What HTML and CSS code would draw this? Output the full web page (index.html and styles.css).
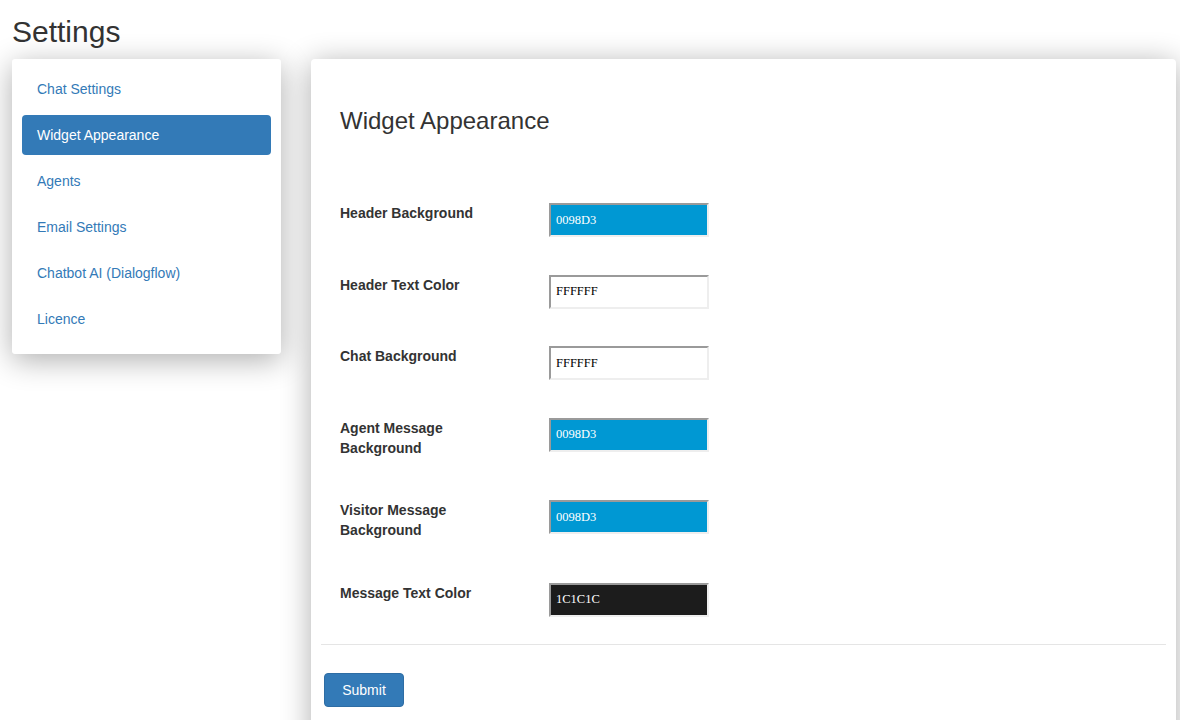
FILE: index.html
```html
<!DOCTYPE html>
<html>
<head>
<meta charset="utf-8">
<link rel="stylesheet" href="styles.css">
</head>
<body>
<div class="page">
  <h1 class="title">Settings</h1>
  <div class="layout">
    <nav class="sidebar">
      <a class="nav-item" href="#">Chat Settings</a>
      <a class="nav-item active" href="#">Widget Appearance</a>
      <a class="nav-item" href="#">Agents</a>
      <a class="nav-item" href="#">Email Settings</a>
      <a class="nav-item" href="#">Chatbot AI (Dialogflow)</a>
      <a class="nav-item" href="#">Licence</a>
    </nav>
    <main class="panel">
      <div class="panel-body">
        <h2 class="heading">Widget Appearance</h2>
        <form class="form">
          <div class="row">
            <label class="label">Header Background</label>
            <input class="color blue" type="text" value="0098D3">
          </div>
          <div class="row">
            <label class="label">Header Text Color</label>
            <input class="color white" type="text" value="FFFFFF">
          </div>
          <div class="row">
            <label class="label">Chat Background</label>
            <input class="color white" type="text" value="FFFFFF">
          </div>
          <div class="row">
            <label class="label">Agent Message Background</label>
            <input class="color blue" type="text" value="0098D3">
          </div>
          <div class="row">
            <label class="label">Visitor Message Background</label>
            <input class="color blue" type="text" value="0098D3">
          </div>
          <div class="row">
            <label class="label">Message Text Color</label>
            <input class="color dark" type="text" value="1C1C1C">
          </div>
        </form>
      </div>
      <hr class="divider">
      <div class="footer">
        <button class="btn" type="button">Submit</button>
      </div>
    </main>
  </div>
</div>
</body>
</html>
```

FILE: styles.css
```css
html, body {
  margin: 0;
  padding: 0;
  background: #fff;
  font-family: "Liberation Sans", Arial, sans-serif;
  font-size: 14px;
  color: #333;
  overflow: hidden;
}

.page {
  padding: 0 4px 0 12px;
}

.title {
  margin: 15px 0 11px;
  font-size: 30px;
  line-height: 33px;
  font-weight: 400;
  color: #333;
}

.layout {
  display: flex;
  align-items: flex-start;
  gap: 30px;
}

.sidebar {
  width: 249px;
  flex: none;
  padding: 10px 10px 15px;
  background: #fff;
  border-radius: 3px;
  box-shadow: 0 6px 30px rgba(0, 0, 0, 0.32);
  display: flex;
  flex-direction: column;
  gap: 6px;
}

.nav-item {
  display: block;
  padding: 10px 15px;
  line-height: 20px;
  color: #337ab7;
  text-decoration: none;
  border-radius: 4px;
}

.nav-item.active {
  background: #337ab7;
  color: #fff;
}

.panel {
  flex: 1;
  height: 700px;
  background: #fff;
  border-radius: 4px;
  box-shadow: 0 4px 30px rgba(0, 0, 0, 0.32);
  padding: 0 10px;
}

.panel-body {
  padding: 49px 19px 0;
}

.heading {
  margin: 0 0 69px;
  font-size: 24px;
  line-height: 26px;
  font-weight: 400;
  color: #333;
}

.form {
  display: flex;
  flex-direction: column;
  gap: 37.5px;
}

.row {
  display: grid;
  grid-template-columns: 209px 160px;
  align-items: start;
}

.label {
  width: 150px;
  font-weight: 700;
  line-height: 20px;
  margin: 0 0 5px;
}

.color {
  box-sizing: border-box;
  width: 160px;
  height: 34px;
  margin: 0;
  padding: 0 5px;
  font-family: "Liberation Serif", "Times New Roman", serif;
  font-size: 12.5px;
  border-style: solid;
  border-width: 2px;
  border-color: #9a9a9a #eeeeee #eeeeee #9a9a9a;
  outline: none;
}

.color.blue {
  background: #0098d3;
  color: #fff;
}

.color.white {
  background: #fff;
  color: #000;
}

.color.dark {
  background: #1c1c1c;
  color: #fff;
}

.divider {
  margin: 27.5px 0 28px;
  border: 0;
  border-top: 1px solid #e5e5e5;
}

.footer {
  padding-left: 3px;
}

.btn {
  width: 80px;
  height: 34px;
  padding: 0;
  font-family: "Liberation Sans", Arial, sans-serif;
  font-size: 14px;
  color: #fff;
  background: #337ab7;
  border: 1px solid #2e6da4;
  border-radius: 4px;
}
```
